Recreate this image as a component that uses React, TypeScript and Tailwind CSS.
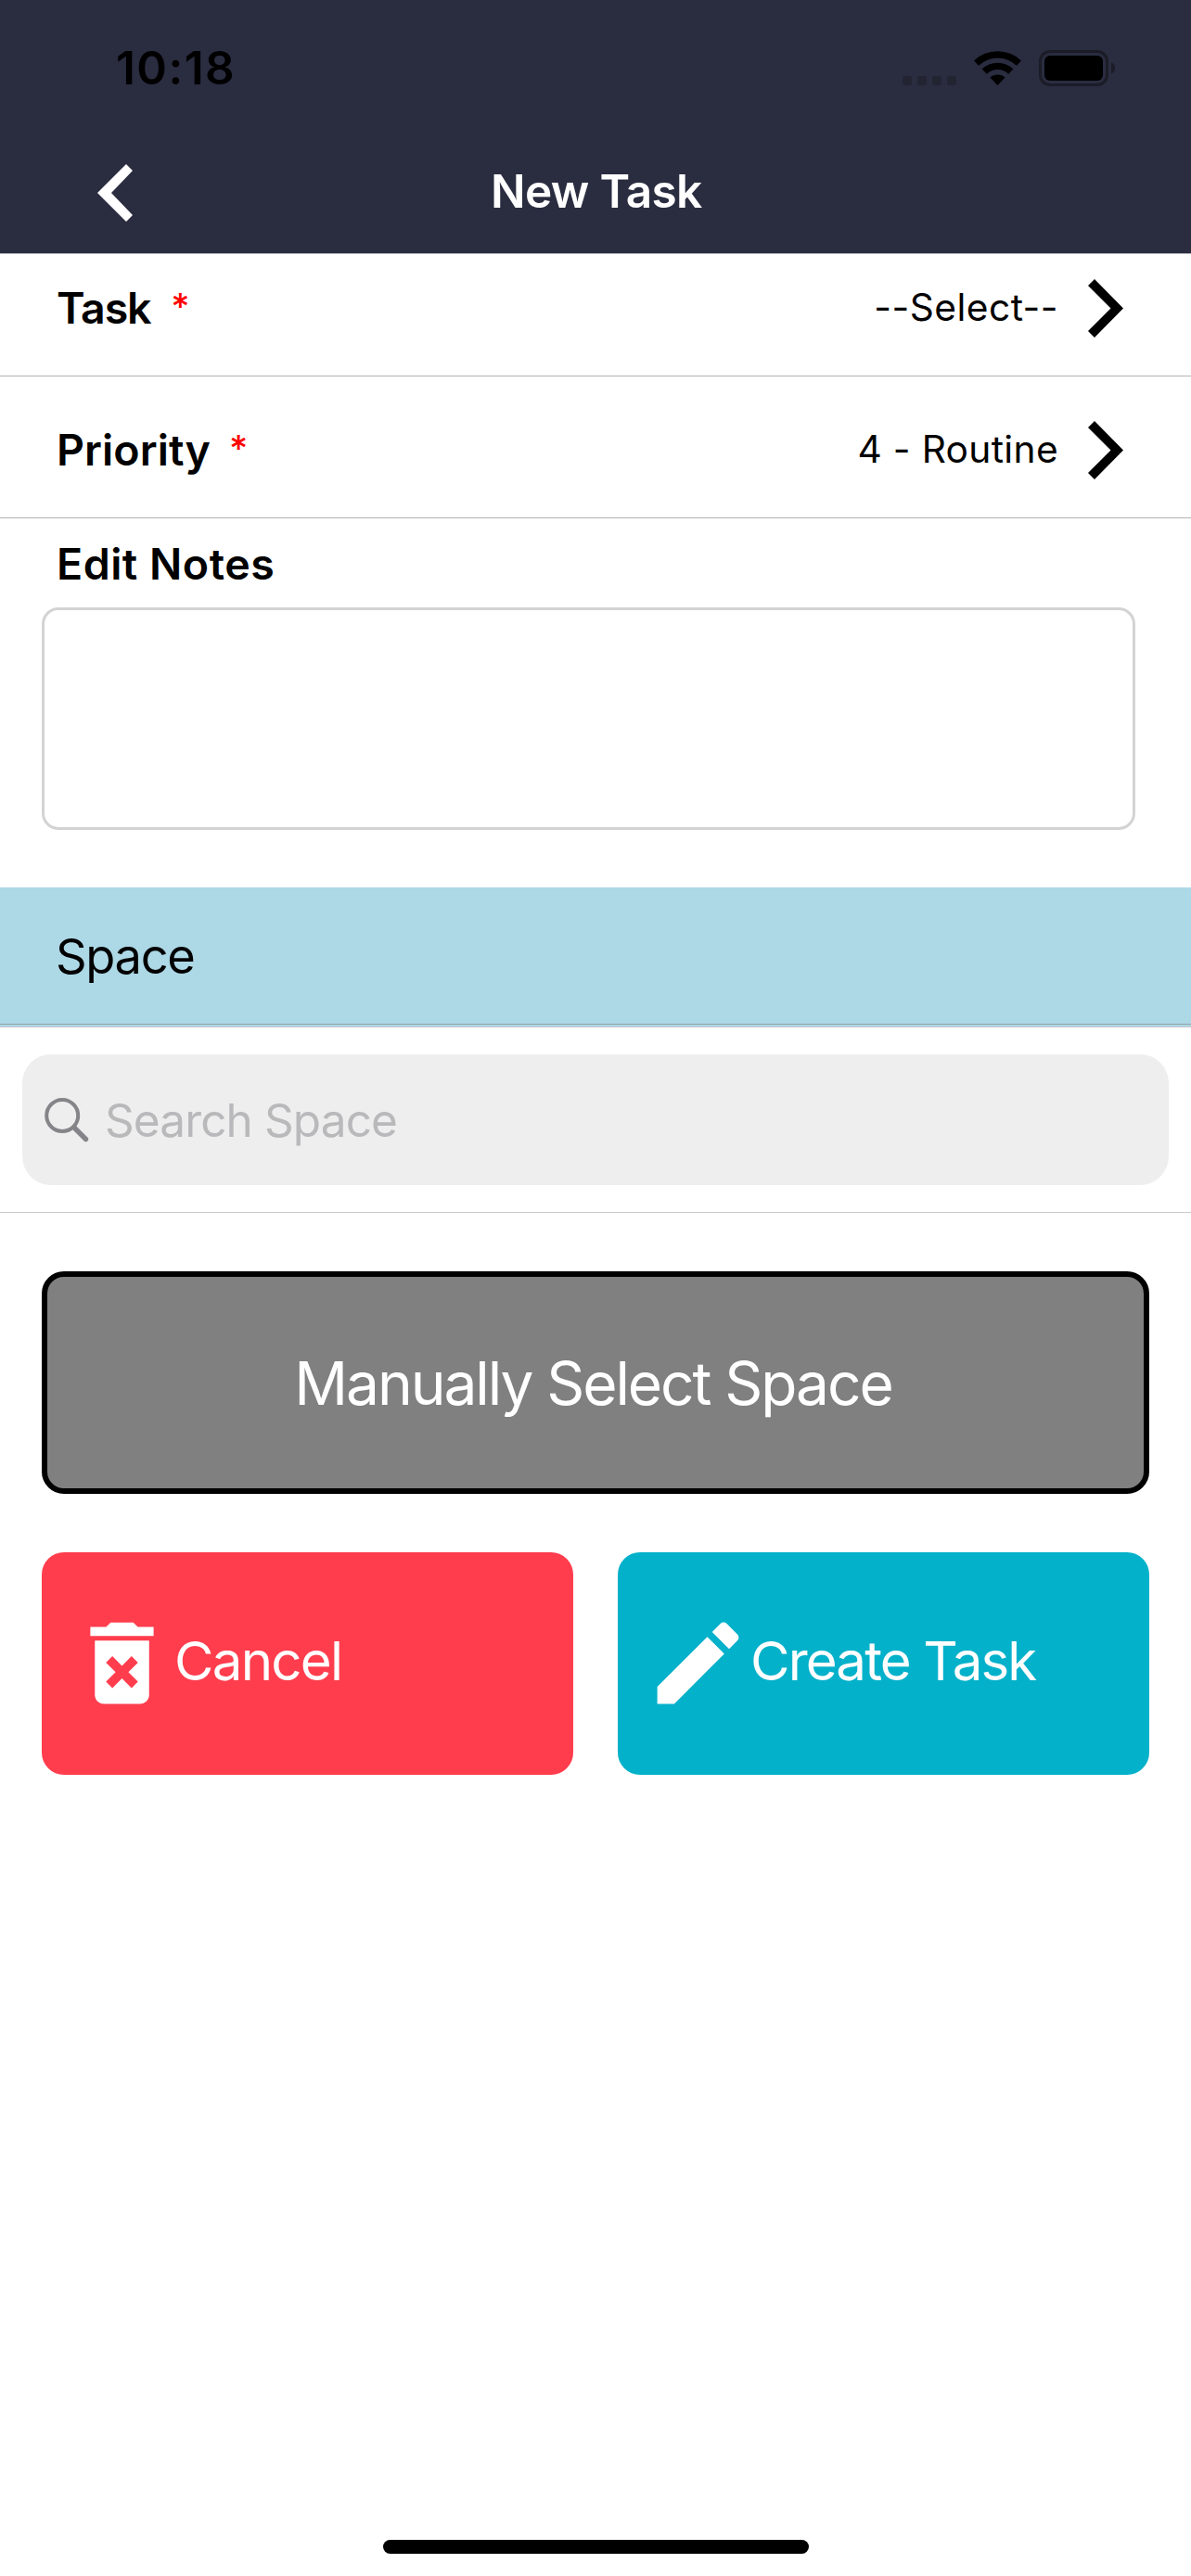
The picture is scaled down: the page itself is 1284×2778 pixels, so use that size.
import { MdDeleteForever, MdEdit } from "react-icons/md";

function StatusBar() {
  return (
    <div className="flex h-[146px] items-center justify-between pl-[125px] pr-[81px]">
      <span className="text-[49.5px] leading-[60px] font-semibold tracking-[1.43px] text-black">10:18</span>
      <div className="flex items-start">
        <div className="mt-[28px] flex gap-[6px]">
          <i className="h-[10px] w-[10px] rounded-[3px] bg-[#222431]" />
          <i className="h-[10px] w-[10px] rounded-[3px] bg-[#222431]" />
          <i className="h-[10px] w-[10px] rounded-[3px] bg-[#222431]" />
          <i className="h-[10px] w-[10px] rounded-[3px] bg-[#222431]" />
        </div>
        <svg className="mt-px ml-[19px]" width="51" height="37" viewBox="0 0 51 37" fill="#000">
          <path d="M0 10.4A37 37 0 0 1 51 10.4L46 15.8A29.5 29.5 0 0 0 5 15.8Z" />
          <path d="M8.7 19.4A24.5 24.5 0 0 1 42.3 19.4L37.3 24.8A17 17 0 0 0 13.7 24.8Z" />
          <path d="M17.4 28.6A12 12 0 0 1 33.6 28.6L25.5 37Z" />
        </svg>
        <svg className="ml-[19px]" width="83" height="39" viewBox="0 0 83 39">
          <rect x="1.5" y="1.5" width="72" height="36" rx="10.5" fill="none" stroke="#1b1c27" strokeWidth="3" />
          <rect x="6" y="6" width="63" height="27" rx="6" fill="#000" />
          <path d="M78 13.5A6.5 6.5 0 0 1 78 25.5Z" fill="#1b1c27" />
        </svg>
      </div>
    </div>
  );
}

function Header() {
  return (
    <header className="h-[274px] border-b border-[#b2b3b8] bg-[#2a2c40]">
      <StatusBar />
      <div className="flex h-[123px] items-center pl-[105px]">
        <svg className="mt-px" width="38" height="62" viewBox="0 0 38 62" fill="#fff">
          <path d="M0 31L31 0L38 7L15 31L38 55L31 62Z" />
        </svg>
        <h1 className="ml-[386px] pb-[3px] text-[49.5px] leading-[60px] font-semibold tracking-[-0.68px] text-white">New Task</h1>
      </div>
    </header>
  );
}

function Chevron() {
  return (
    <svg width="38" height="63" viewBox="0 0 38 63" fill="#000">
      <path d="M38 31.5L7 0L0 7L24.5 31.5L0 56L7 63Z" />
    </svg>
  );
}

export default function App() {
  return (
    <div className="flex h-[2778px] w-[1284px] flex-col bg-white font-['Inter',sans-serif] text-black">
      <Header />

      <div className="flex h-[132px] items-center border-b border-[#b2b2b2] pr-[73px] pb-[14px] pl-[61px]">
        <span className="pb-[2px] text-[46.5px] leading-[56px] font-semibold tracking-[-1.18px]">Task</span>
        <span className="ml-[22px] pb-[4px] text-[39px] leading-[56px] font-medium text-[#ff0000]">*</span>
        <span className="mr-[32px] ml-auto pb-px text-[40.7px] leading-[56px] tracking-[0.47px]">--Select--</span>
        <Chevron />
      </div>

      <div className="flex h-[153px] items-center border-b border-[#b2b2b2] pt-[7px] pr-[73px] pl-[61px]">
        <span className="pb-[2px] text-[46.5px] leading-[56px] font-semibold tracking-[0.09px]">Priority</span>
        <span className="ml-[20px] pb-[4px] text-[39px] leading-[56px] font-medium text-[#ff0000]">*</span>
        <span className="mr-[32px] ml-auto pb-px text-[40.7px] leading-[56px] tracking-[0.34px]">4 - Routine</span>
        <Chevron />
      </div>

      <div className="flex h-[96px] items-center pt-[2px] pl-[61px]">
        <span className="text-[46.5px] leading-[56px] font-semibold tracking-[0.51px]">Edit Notes</span>
      </div>
      <div className="mr-[60px] ml-[45px] h-[240px] shrink-0 rounded-[18px] border-[3px] border-[#d3d3d3]" />

      <div className="mt-[62px] flex h-[148px] shrink-0 items-center border-b border-[#95a3a8] bg-[#add8e6] pl-[60px]">
        <span className="text-[52.4px] leading-[64px] tracking-[-1.3px]">Space</span>
      </div>
      <div className="h-[3px] shrink-0 border-b border-[#c8c7cc] bg-[#add8e6]" />

      <div className="h-[200px] shrink-0 border-b border-[#c9c8cb] px-[24px] pt-[29px]">
        <div className="flex h-[141px] items-center rounded-[31px] bg-[#eeeeee] pl-[24px]">
          <svg className="mt-px" width="48" height="48" viewBox="0 0 48 48" fill="none" stroke="#858589" strokeLinecap="round">
            <circle cx="19.2" cy="19" r="17" strokeWidth="4" />
            <path d="M32 32L44.5 44.5" strokeWidth="5.4" />
          </svg>
          <span className="ml-[17px] text-[49.5px] leading-[60px] tracking-[-0.89px] text-[#b9b9bb]">Search Space</span>
        </div>
      </div>

      <div className="mx-[45px] mt-[63px] flex flex-col gap-[63px]">
        <button className="flex h-[240px] items-center justify-center rounded-[24px] border-[6px] border-black bg-[#808080] pt-[2px] pr-[5px] text-[64px] leading-[78px] tracking-[-2.08px] text-white">
          Manually Select Space
        </button>
        <div className="grid grid-cols-2 gap-[48px]">
          <button className="flex h-[240px] items-center rounded-[24px] bg-[#ff3d4d] pb-px pl-[28px] text-white">
            <MdDeleteForever className="h-[117px] w-[117px]" />
            <span className="-ml-[2px] pb-[5px] text-[58.2px] leading-[70px] tracking-[-1.74px]">Cancel</span>
          </button>
          <button className="flex h-[240px] items-center rounded-[24px] bg-[#04b1ca] pb-px pl-[28px] text-white">
            <MdEdit className="h-[117px] w-[117px]" />
            <span className="-ml-[2px] pb-[5px] text-[58.2px] leading-[70px] tracking-[-1.87px]">Create Task</span>
          </button>
        </div>
      </div>

      <div className="mx-auto mt-auto mb-[24px] h-[15px] w-[459px] rounded-full bg-black" />
    </div>
  );
}
